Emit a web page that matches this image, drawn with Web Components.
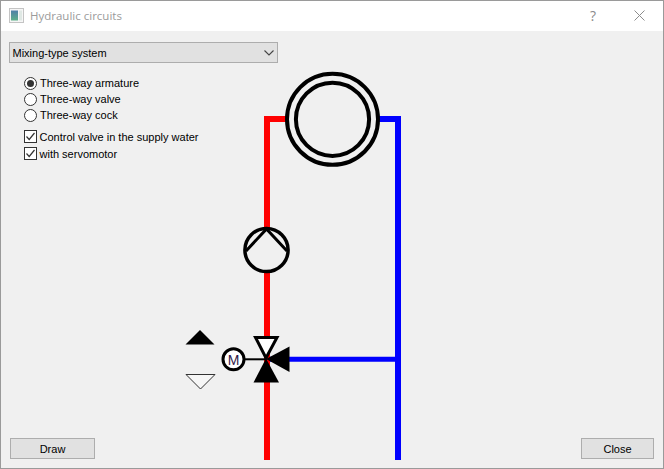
<!DOCTYPE html>
<html><head><meta charset="utf-8"><title>Hydraulic circuits</title>
<style>html,body{margin:0;padding:0;height:100%;overflow:hidden}body{font:11px "Liberation Sans",sans-serif}</style>
</head><body>
<template id="t-window"><style>
:host{display:flex;flex-direction:column;width:664px;height:469px;box-sizing:border-box;border:1px solid #9a9a9a;background:#f0f0f0;color:#000}
</style><slot name="title"></slot><slot></slot></template>

<template id="t-titlebar"><style>
:host{display:flex;align-items:center;height:30px;box-sizing:border-box;padding:0 0 1px 8px;background:#fff;color:#9b9b9b;font:11.500px "Open Sans",sans-serif;flex:none}
svg{display:block}
.t{margin-left:6px;flex:1}
.q{width:14px;text-align:center;color:#8a8a8a;font-size:14px;margin-right:34px}
.x{margin-right:18px}
</style>
<svg width="15" height="15" viewBox="0 0 15 15"><defs><linearGradient id="g" x1="0" y1="0" x2="0" y2="1"><stop offset="0" stop-color="#4f7fa8"/><stop offset="1" stop-color="#5fb08a"/></linearGradient></defs><rect x=".5" y=".5" width="14" height="14" fill="#f6f6f6" stroke="#c4c4c4"/><rect x="2" y="2.500" width="7" height="10" fill="url(#g)"/><rect x="10" y="2.500" width="3" height="10" fill="#dfe8e4"/></svg>
<span class="t"><slot></slot></span><span class="q">?</span>
<svg class="x" width="11" height="11" viewBox="0 0 11 11"><path d="M.5.5l10 10M10.500.5l-10 10" stroke="#8c8c8c" fill="none"/></svg></template>

<template id="t-client"><style>
:host{display:grid;flex:1;min-height:0;position:relative}
.a{grid-area:1/1;display:flex;flex-direction:column;padding:11px 9px 9px 8px;min-height:0}
.b{grid-area:1/1;display:block;overflow:hidden;pointer-events:none}
.opts{display:flex;flex-direction:column;padding:12px 0 0 15px}
.sp{flex:1}
.foot{display:flex;justify-content:space-between;padding-left:1px}
</style>
<div class="a"><slot name="combo"></slot><div class="opts"><slot name="opts"></slot></div><div class="sp"></div><div class="foot"><slot name="foot"></slot></div></div>
<div class="b"><slot name="diagram"></slot></div></template>

<template id="t-combo"><style>
:host{display:flex;align-items:center;box-sizing:border-box;width:269px;height:21px;border:1px solid #adadad;background:#e1e1e1;padding:0 3px 0 2.500px;font-size:11px}
span{flex:1}
</style><span><slot></slot></span><svg width="10" height="6" viewBox="0 0 10 6"><path d="M.5.500L5 5 9.500.500" fill="none" stroke="#444" stroke-width="1.100"/></svg></template>

<template id="t-radio"><style>
:host{display:flex;align-items:center;height:16px;font-size:11px;gap:3px}
svg{flex:none}
</style><svg width="13" height="13" viewBox="0 0 13 13"><circle cx="6.500" cy="6.500" r="6" fill="#fff" stroke="#333"/><circle class="d" cx="6.500" cy="6.500" r="3.500" fill="#333"/></svg><span><slot></slot></span></template>

<template id="t-check"><style>
:host{display:flex;align-items:center;height:17px;font-size:11px;gap:2.500px}
svg{flex:none}
</style><svg width="13" height="13" viewBox="0 0 13 13"><rect x=".5" y=".5" width="12" height="12" fill="#fff" stroke="#333"/><path d="M2.500 6.500L5.200 9.500 10.500 3" fill="none" stroke="#333" stroke-width="1.200"/></svg><span><slot></slot></span></template>

<template id="t-button"><style>
:host{display:flex;align-items:center;justify-content:center;box-sizing:border-box;height:21px;border:1px solid #adadad;background:#e1e1e1;font-size:11px}
</style><slot></slot></template>

<template id="t-diagram"><style>:host{display:block}svg{display:block}text{font:14px "Liberation Sans",sans-serif}</style>
<svg width="662" height="437" viewBox="1 31 662 437">
<g fill="none" stroke-linejoin="miter">
<path d="M267 460V119H300" stroke="#f00" stroke-width="6"/>
<path d="M398 460V119H365" stroke="#00f" stroke-width="6"/>
<path d="M398 359.300H270" stroke="#00f" stroke-width="5"/>
</g>
<circle cx="332.500" cy="119.300" r="45.500" fill="#f0f0f0" stroke="#000" stroke-width="4"/>
<circle cx="332.500" cy="119.300" r="36.600" fill="none" stroke="#000" stroke-width="4"/>
<circle cx="266.500" cy="250" r="21.600" fill="#f0f0f0" stroke="#000" stroke-width="3.500"/>
<path d="M246 251L266.500 229 287 251" fill="none" stroke="#000" stroke-width="3"/>
<path d="M245 359.300H266" stroke="#000" stroke-width="2"/>
<path d="M255.500 337.500H277L266 358Z" fill="#fff" stroke="#000" stroke-width="3"/>
<path d="M266 358.500L279 382.500H253.500Z" fill="#000"/>
<path d="M266 359L289.500 346.500V372Z" fill="#000"/>
<circle cx="233.500" cy="359.300" r="10.500" fill="#fff" stroke="#000" stroke-width="3"/>
<text x="233.500" y="364.500" text-anchor="middle" fill="#301848">M</text>
<path d="M200 330L214.500 344.500H185.500Z" fill="#000"/>
<path d="M186 374.500H215L200.500 389Z" fill="#f6f6f6" stroke="#333"/>
</svg></template>

<hy-window>
<hy-titlebar slot="title">Hydraulic circuits</hy-titlebar>
<hy-client>
<hy-combo slot="combo">Mixing-type system</hy-combo>
<hy-radio slot="opts" checked>Three-way armature</hy-radio>
<hy-radio slot="opts">Three-way valve</hy-radio>
<hy-radio slot="opts" style="margin-bottom:5px">Three-way cock</hy-radio>
<hy-check slot="opts">Control valve in the supply water</hy-check>
<hy-check slot="opts">with servomotor</hy-check>
<hy-button slot="foot" style="width:85px">Draw</hy-button>
<hy-button slot="foot" style="width:73px">Close</hy-button>
<hy-diagram slot="diagram"></hy-diagram>
</hy-client>
</hy-window>
<script>
function def(tag,id,fn){customElements.define(tag,class extends HTMLElement{constructor(){super();const r=this.attachShadow({mode:'open'});r.appendChild(document.getElementById(id).content.cloneNode(true));}connectedCallback(){if(fn)fn(this);}});}
def('hy-window','t-window');def('hy-titlebar','t-titlebar');def('hy-client','t-client');def('hy-combo','t-combo');
def('hy-radio','t-radio',e=>{if(!e.hasAttribute('checked'))e.shadowRoot.querySelector('.d').remove();});
def('hy-check','t-check');def('hy-button','t-button');def('hy-diagram','t-diagram');
</script>
</body></html>
